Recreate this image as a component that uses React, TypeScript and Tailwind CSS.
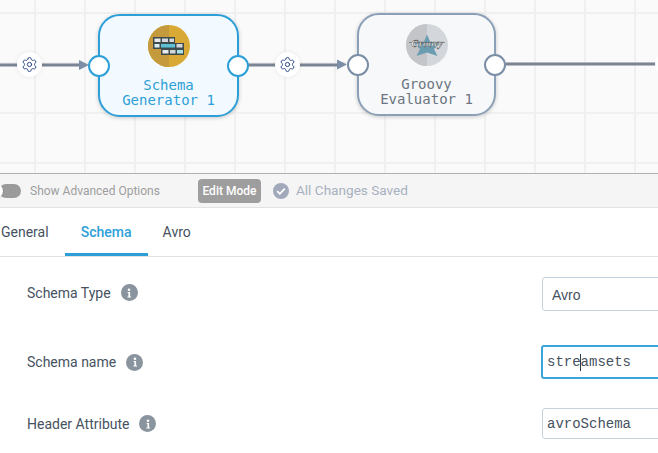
import { Settings } from "lucide-react";

function Port({ x, color }: { x: string; color: string }) {
  return <div className={`absolute top-1/2 -mt-[11px] h-[22px] w-[22px] rounded-full border-2 bg-white ${x} ${color}`} />;
}

function GearBadge({ x }: { x: string }) {
  return (
    <div className={`absolute top-[52px] flex h-[25px] w-[25px] items-center justify-center rounded-full bg-white shadow-[0_0_4px_rgba(0,0,0,0.08)] ${x}`}>
      <Settings className="h-[17px] w-[17px] text-[#2c4a86]" strokeWidth={1.4} />
    </div>
  );
}

function SchemaIcon() {
  return (
    <svg viewBox="0 0 42 42" className="h-[42px] w-[42px]">
      <circle cx="21" cy="21" r="21" fill="#d9a935" />
      <path d="M21 0a21 21 0 0 0 0 42z" fill="#c49a3c" />
      <path d="M5 12h22v6h9v12H13v-6H5z" fill="#3f4a4c" />
      <rect x="6.5" y="13.5" width="6" height="3.5" fill="#e8eaec" />
      <rect x="14" y="13.5" width="6" height="3.5" fill="#d5d8da" />
      <rect x="21.5" y="13.5" width="4.5" height="3.5" fill="#d5d8da" />
      <rect x="6.5" y="19" width="5" height="3.5" fill="#d8f0f2" />
      <rect x="13" y="19" width="14" height="3.5" fill="#5cc3d6" />
      <rect x="28.5" y="19" width="6" height="3.5" fill="#d5d8da" />
      <rect x="14.5" y="25" width="6" height="3.5" fill="#e8eaec" />
      <rect x="22" y="25" width="5.5" height="3.5" fill="#d5d8da" />
      <rect x="29" y="25" width="6" height="3.5" fill="#a8e2e8" />
    </svg>
  );
}

function GroovyIcon() {
  return (
    <svg viewBox="0 0 42 42" className="h-[42px] w-[42px]">
      <circle cx="21" cy="21" r="21" fill="#d3d6da" />
      <path d="M21 0a21 21 0 0 0 0 42z" fill="#c4c5c8" />
      <path d="M21 10.5l3 7 10 1.5-6 6 3.5 7-10.5-3.5-10.5 3.5 3.5-7-6-6 10-1.5z" fill="#6a9db2" />
      <path d="M3 18.5h36" stroke="#666" strokeWidth="0.7" />
      <text x="21" y="23" textAnchor="middle" fontSize="10.5" fontWeight="700" fontStyle="italic" fill="#f2f2f2" stroke="#444" strokeWidth="0.35" fontFamily="'Liberation Serif', serif">Groovy</text>
    </svg>
  );
}

function InfoDot() {
  return (
    <span className="flex h-[17px] w-[17px] shrink-0 items-center justify-center rounded-full bg-[#8a949e]">
      <svg viewBox="0 0 16 16" className="h-4 w-4">
        <circle cx="8" cy="4.8" r="1.3" fill="#fff" />
        <path d="M6.6 7h2.5v4.6h1v1H6.4v-1h1V8h-.8z" fill="#fff" />
      </svg>
    </span>
  );
}

function Row({ label, h, labelClass, children }: { label: string; h: string; labelClass?: string; children: React.ReactNode }) {
  return (
    <div className={`flex items-center justify-between ${h}`}>
      <div className={`flex items-center gap-[10px] text-sm text-[#46525f] ${labelClass ?? ""}`}>
        <span>{label}</span>
        <InfoDot />
      </div>
      {children}
    </div>
  );
}

export default function App() {
  return (
    <div className="h-[453px] w-[658px] overflow-hidden bg-white font-['Roboto',sans-serif]">
      {/* pipeline canvas */}
      <div className="relative h-[174px] overflow-hidden border-b border-[#b0b0b0] bg-[#fafafa] bg-[linear-gradient(to_right,#f0f0f0_2px,transparent_2px),linear-gradient(to_bottom,#f0f0f0_2px,transparent_2px)] bg-[size:50px_50px] bg-[position:34px_12px]">
        <svg className="absolute inset-0" width="658" height="173">
          <path d="M0 65h80M248 65h90M506 64h152" stroke="#7b8494" strokeWidth="3" fill="none" />
          <path d="M79 60l10 5-10 5zM337 59.5l10 5-10 5z" fill="#7b8ea6" />
        </svg>
        <GearBadge x="left-[17px]" />
        <GearBadge x="left-[275px]" />

        <div className="absolute left-[98px] top-[14px] flex h-[103px] w-[141px] flex-col items-center rounded-[22px] border-2 border-[#2d9fd8] bg-[#f3faff] pt-[9px] text-[#2d9fd8] shadow-[0_1px_4px_rgba(0,0,0,0.2)]">
          <SchemaIcon />
          <div className="mt-[11px] text-center font-['DejaVu_Sans_Mono',monospace] text-[14px] leading-[15px]">
            Schema<br />Generator 1
          </div>
          <Port x="-left-[12px]" color="border-[#2d9fd8]" />
          <Port x="-right-[12px]" color="border-[#2d9fd8]" />
        </div>

        <div className="absolute left-[357px] top-[13px] flex h-[103px] w-[139px] flex-col items-center rounded-[22px] border-2 border-[#8ba0b6] bg-[#f6f8fa] pt-[9px] text-[#6b7480] shadow-[0_1px_4px_rgba(0,0,0,0.2)]">
          <GroovyIcon />
          <div className="mt-[11px] text-center font-['DejaVu_Sans_Mono',monospace] text-[14px] leading-[15px]">
            Groovy<br />Evaluator 1
          </div>
          <Port x="-left-[12px]" color="border-[#7a8ea6]" />
          <Port x="-right-[12px]" color="border-[#7a8ea6]" />
        </div>

        <div className="absolute left-[655px] top-[52px] h-6 w-6 rounded-full bg-white" />
      </div>

      {/* toolbar */}
      <div className="flex h-[34px] items-center border-b border-[#e3e3e3] bg-[#f5f5f5]">
        <div className="relative -ml-[1px] h-[14px] w-[22px] rounded-full bg-[#9b9b9b]">
          <div className="absolute -left-[10px] top-0 h-[14px] w-[14px] rounded-full bg-white shadow" />
        </div>
        <span className="ml-[9px] text-[12px] text-[#9e9e9e]">Show Advanced Options</span>
        <span className="ml-[38px] flex h-6 w-[63px] items-center justify-center rounded bg-[#9e9e9e] text-[12px] font-medium text-white">Edit Mode</span>
        <svg viewBox="0 0 16 16" className="ml-3 h-4 w-4">
          <circle cx="8" cy="8" r="8" fill="#a1a9bb" />
          <path d="M4.2 8.2l2.6 2.6 5-5.2" stroke="#fff" strokeWidth="1.8" fill="none" />
        </svg>
        <span className="ml-[7px] text-[13.6px] text-[#a8b0c0]">All Changes Saved</span>
      </div>

      {/* tabs */}
      <div className="flex h-[49px] items-stretch border-b border-[#dfe3e6] text-sm text-[#46525f]">
        <span className="ml-[1px] flex items-center">General</span>
        <span className="ml-[16px] flex w-[83px] items-center justify-center border-b-[3px] border-[#2d9fd8] pt-[3px] font-medium text-[#2d9fd8]">Schema</span>
        <span className="ml-[15px] flex items-center">Avro</span>
      </div>

      {/* form */}
      <div className="flex flex-col pl-[27px] pt-5">
        <Row label="Schema Type" h="h-[34px]" labelClass="pb-[3px]">
          <div className="-mr-4 flex h-[34px] w-[132px] items-center rounded-[3px] border border-[#c5d3df] pl-[9px] pt-px font-['Liberation_Sans',sans-serif] text-sm text-[#46525f]">Avro</div>
        </Row>
        <div className="mt-[34px]">
          <Row label="Schema name" h="h-[34px]">
            <div className="-mr-4 flex h-[34px] w-[133px] items-center rounded-[3px] border-2 border-[#3aa5dc] pl-[4px] font-['Liberation_Mono',monospace] text-sm text-[#46525f]">
              stre<span className="-mx-[0.5px] h-[17px] w-px bg-[#2c3e50]" />amsets
            </div>
          </Row>
        </div>
        <div className="mt-[29px]">
          <Row label="Header Attribute" h="h-[31px]">
            <div className="-mr-4 flex h-[31px] w-[132px] items-center rounded-[3px] border border-[#c5d3df] pl-[4px] font-['Liberation_Mono',monospace] text-sm text-[#46525f]">avroSchema</div>
          </Row>
        </div>
      </div>
    </div>
  );
}
